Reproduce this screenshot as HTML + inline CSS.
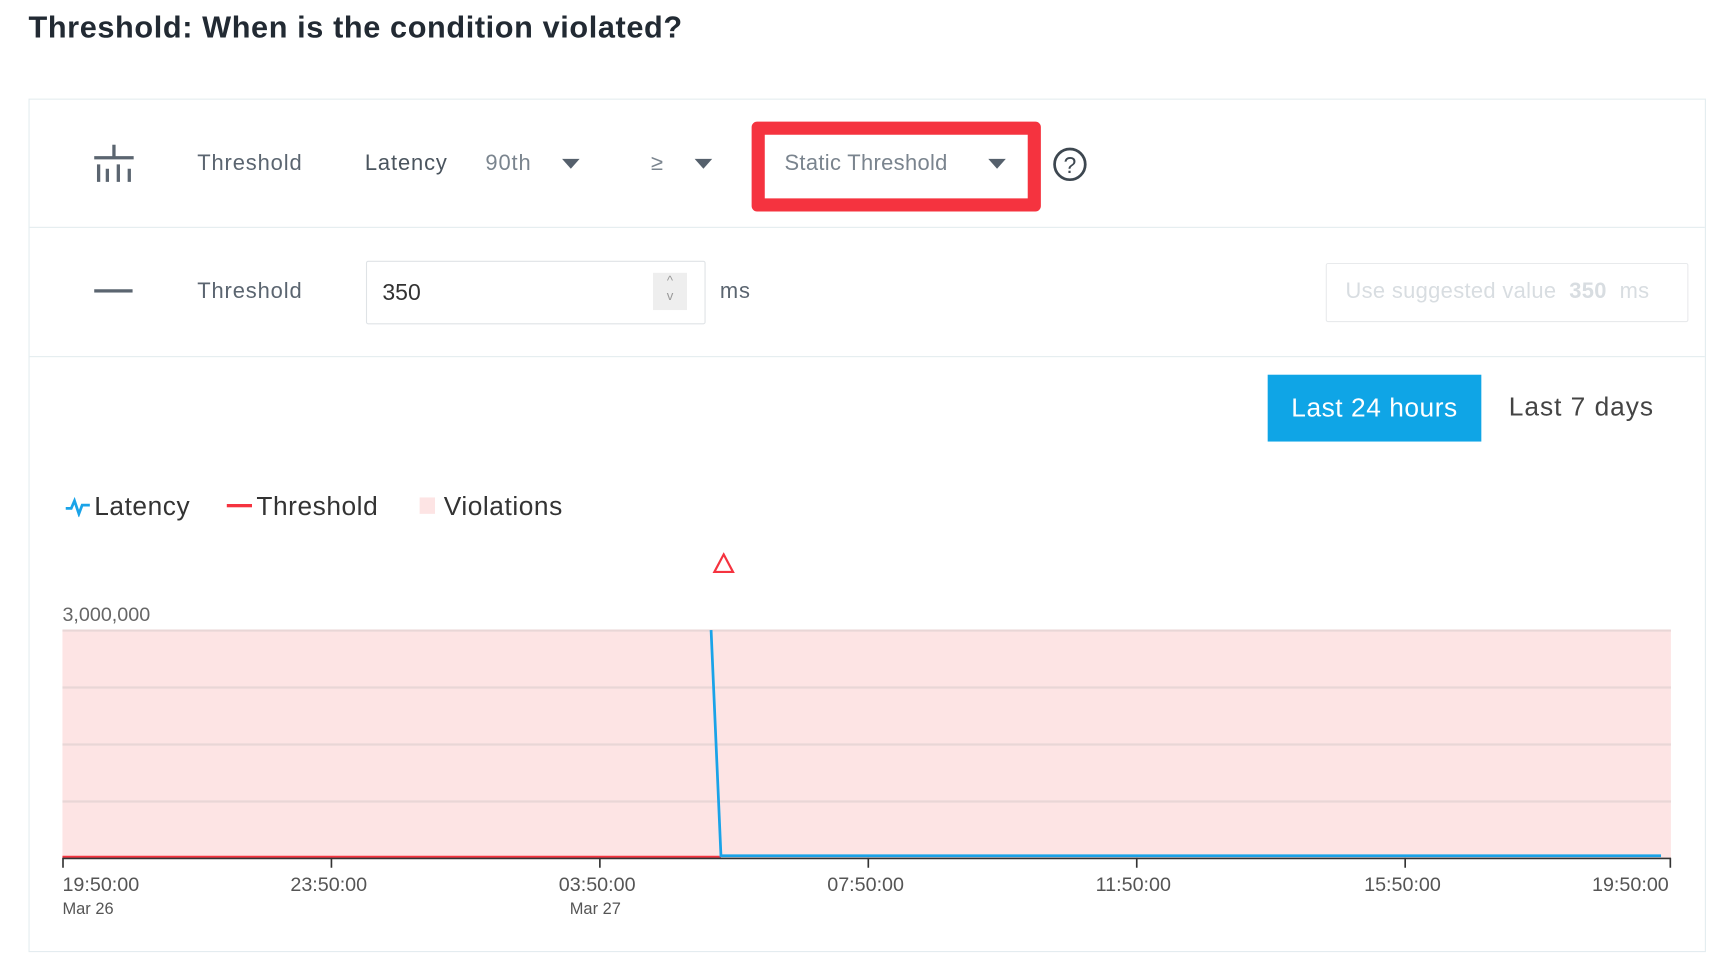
<!DOCTYPE html>
<html><head><meta charset="utf-8"><style>
html,body{margin:0;padding:0;background:#fff;overflow:hidden;width:1718px;height:974px}
#w{position:absolute;left:0;top:0;width:1568px;height:889px;transform:scale(1.09566);transform-origin:0 0;font-family:"Liberation Sans",sans-serif}
.a{position:absolute;white-space:nowrap}
.t{font-size:20px;color:#5b6570;line-height:20px;letter-spacing:0.8px}
.l{letter-spacing:0.5px}
.car{position:absolute;width:0;height:0;border-left:8px solid transparent;border-right:8px solid transparent;border-top:9px solid #55606c}
</style></head><body><div id="w">
<div class="a" style="left:26px;top:9px;font-size:28px;font-weight:bold;color:#222a33;letter-spacing:0.55px">Threshold: When is the condition violated?</div>
<div class="a" style="left:26px;top:90px;width:1529px;height:777px;border:1px solid #e3ecef"></div>
<div class="a" style="left:27px;top:207px;width:1529px;height:1px;background:#e3ecef"></div>
<div class="a" style="left:27px;top:325px;width:1529px;height:1px;background:#e3ecef"></div>
<svg class="a" style="left:84px;top:132px" width="40" height="36" stroke="#5b6570" stroke-width="3"><path d="M2 12H38M20 0V12M6 18V34M14 22V34M24 18V34M34 22V34"/></svg>
<div class="a t" style="left:180px;top:139px">Threshold</div>
<div class="a t" style="left:333px;top:139px;color:#4a545e">Latency</div>
<div class="a t" style="left:443px;top:139px;color:#7a848e">90th</div>
<div class="car" style="left:513px;top:145px"></div>
<div class="a t" style="left:594px;top:139px;color:#7a848e">≥</div>
<div class="car" style="left:634px;top:145px"></div>
<div class="a" style="left:686px;top:111px;width:240px;height:58px;border:12px solid #f5333f;border-radius:5px"></div>
<div class="a t" style="left:716px;top:139px;color:#7a848e;letter-spacing:0.3px">Static Threshold</div>
<div class="car" style="left:902px;top:145px"></div>
<svg class="a" style="left:960px;top:133px" width="34" height="34"><circle cx="16.5" cy="17" r="14" fill="none" stroke="#3d4750" stroke-width="2.5"/><text x="16.5" y="25" font-size="21" text-anchor="middle" fill="#3d4750" font-family="Liberation Sans">?</text></svg>
<div class="a" style="left:86px;top:264px;width:35px;height:3px;background:#5b6570"></div>
<div class="a t" style="left:180px;top:256px">Threshold</div>
<div class="a" style="left:334px;top:238px;width:308px;height:56px;border:1px solid #dfe3e6;border-radius:2px"></div>
<div class="a" style="left:349px;top:256px;font-size:21px;color:#333">350</div>
<div class="a" style="left:596px;top:249px;width:31px;height:34px;background:#eee;color:#999;font-size:12px;text-align:center;line-height:14px">^<br>v</div>
<div class="a t" style="left:657px;top:256px">ms</div>
<div class="a" style="left:1210px;top:240px;width:329px;height:52px;border:1px solid #e8eaec;border-radius:2px"></div>
<div class="a t" style="left:1228px;top:256px;color:#d8dde1;letter-spacing:0.3px">Use suggested value &nbsp;<b>350</b> &nbsp;ms</div>
<div class="a l" style="left:1157px;top:342px;width:195px;height:61px;background:#0fa5e6;color:#fff;font-size:24px;line-height:61px;text-align:center">Last 24 hours</div>
<div class="a l" style="left:1377px;top:358px;font-size:24px;color:#444;letter-spacing:0.9px">Last 7 days</div>
<svg class="a" style="left:59px;top:452px" width="24" height="20"><path d="M1 12H6L9 5L13 17L16 9H23" fill="none" stroke="#1aa3e8" stroke-width="2.5"/></svg>
<div class="a l" style="left:86px;top:449px;font-size:24px;color:#333">Latency</div>
<div class="a" style="left:207px;top:460px;width:23px;height:3px;background:#f5333f"></div>
<div class="a l" style="left:234px;top:449px;font-size:24px;color:#333">Threshold</div>
<div class="a" style="left:383px;top:454px;width:14px;height:15px;background:#fde4e4"></div>
<div class="a l" style="left:405px;top:449px;font-size:24px;color:#333">Violations</div>
<svg class="a" style="left:650px;top:504px" width="21" height="20"><path d="M10.5 2L19 18H2Z" fill="none" stroke="#f5333f" stroke-width="2"/></svg>
<div class="a" style="left:57px;top:551px;font-size:18px;color:#666">3,000,000</div>
<svg class="a" style="left:0;top:570px" width="1568" height="230">
<rect x="57" y="5" width="1468" height="208" fill="#fde4e4"/>
<path d="M57 5.5H1525M57 57.5H1525M57 109.5H1525M57 161.5H1525" stroke="#e9d6d6" stroke-width="2"/>
<path d="M57 212H658" stroke="#f5333f" stroke-width="2"/>
<path d="M57 213.5H1525" stroke="#333" stroke-width="1.5"/>
<path d="M57.5 213V222M302.5 213V222M547.5 213V222M792.5 213V222M1037.5 213V222M1282.5 213V222M1524.5 213V222" stroke="#333" stroke-width="1.5"/>
<path d="M649 5L658 211H1516" fill="none" stroke="#1aa3e8" stroke-width="2.5"/>
</svg>
<div class="a" style="left:57px;top:797px;font-size:18px;color:#555">19:50:00</div>
<div class="a" style="left:57px;top:821px;font-size:15px;color:#555">Mar 26</div>
<div class="a" style="left:265px;top:797px;font-size:18px;color:#555">23:50:00</div>
<div class="a" style="left:510px;top:797px;font-size:18px;color:#555">03:50:00</div>
<div class="a" style="left:520px;top:821px;font-size:15px;color:#555">Mar 27</div>
<div class="a" style="left:755px;top:797px;font-size:18px;color:#555">07:50:00</div>
<div class="a" style="left:1000px;top:797px;font-size:18px;color:#555">11:50:00</div>
<div class="a" style="left:1245px;top:797px;font-size:18px;color:#555">15:50:00</div>
<div class="a" style="left:1453px;top:797px;font-size:18px;color:#555">19:50:00</div>
</div></body></html>
